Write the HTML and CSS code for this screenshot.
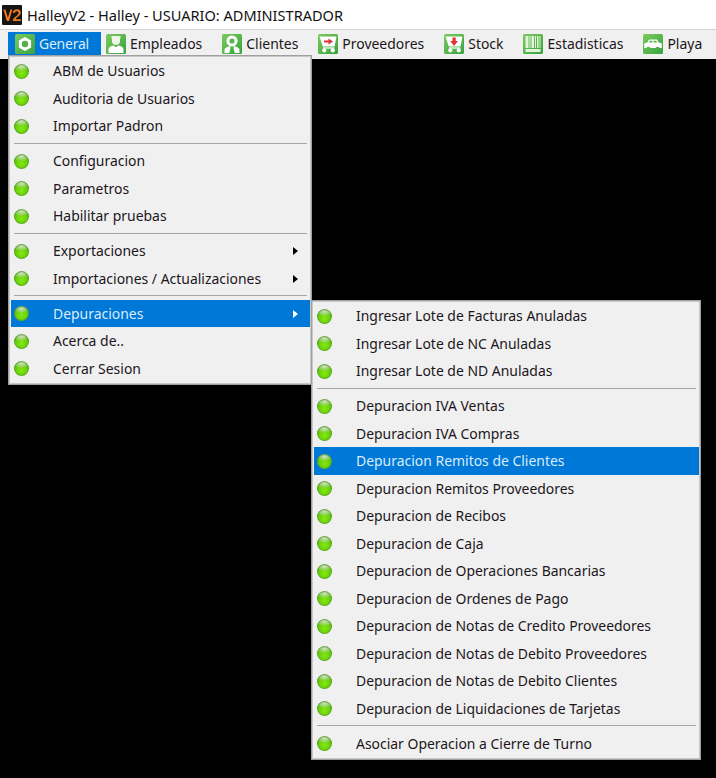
FILE: index.html
```html
<!DOCTYPE html>
<html lang="es">
<head>
<meta charset="utf-8">
<title>HalleyV2 - Halley - USUARIO: ADMINISTRADOR</title>
<link rel="stylesheet" href="styles.css">
</head>
<body>
<svg class="defs" width="0" height="0" aria-hidden="true">
  <defs>
    <linearGradient id="g" x1="0" y1="0" x2="1" y2="1">
      <stop offset="0" stop-color="#7ccb5e"/>
      <stop offset="1" stop-color="#37a33f"/>
    </linearGradient>
    <symbol id="tile" viewBox="0 0 20 20"><rect x="0" y="0" width="20" height="20" rx="1.5" fill="url(#g)"/></symbol>
  </defs>
</svg>
<header class="titlebar">
  <svg class="logo" viewBox="0 0 20 20"><rect width="20" height="20" rx="1" fill="#151515"/><path d="M1.4 4.5 L4.8 16 L7 16 L10.4 4.5 L8.4 4.5 L5.9 12.8 L3.4 4.5 Z" fill="#f47a20"/><path d="M10.8 7.8 C11 3.2 18.8 3 18.8 7.8 C18.8 10.6 14.4 12 13.6 14.2 L18.8 14.2 L18.8 16 L10.8 16 C10.8 12 16.6 10.6 16.6 7.9 C16.6 5.8 13 5.8 12.9 8 Z" fill="#f47a20"/></svg>
  <span class="title">HalleyV2 - Halley - USUARIO: ADMINISTRADOR</span>
</header>
<nav class="menubar">
  <div class="mitem active">
    <svg class="mico" viewBox="0 0 20 20"><use href="#tile"/><path d="M10 3 L16.1 6.5 V13.5 L10 17 L3.9 13.5 V6.5 Z" fill="#fff"/><circle cx="10" cy="10" r="3.2" fill="#55b04a"/></svg>
    <span>General</span>
  </div>
  <div class="mitem">
    <svg class="mico" viewBox="0 0 20 20"><use href="#tile"/><path d="M5.5 2 H14.5 V4.6 H14 V7.5 C14 9.8 12.2 11 10 11 C7.8 11 6 9.8 6 7.5 V4.6 H5.5 Z" fill="#eef7ea"/><path d="M2.5 19 V15 C2.5 13 5.6 11.9 7.4 11.4 L10 13.2 L12.6 11.4 C14.4 11.9 17.5 13 17.5 15 V19 Z" fill="#fff"/></svg>
    <span>Empleados</span>
  </div>
  <div class="mitem">
    <svg class="mico" viewBox="0 0 20 20"><use href="#tile"/><circle cx="10" cy="7" r="5.6" fill="#fff"/><circle cx="10" cy="7" r="2.6" fill="#5ab54d"/><path d="M2.5 19 V15.8 C2.5 13.8 5.6 13 8 12 L8.4 14.5 L7.2 19 Z M17.5 19 V15.8 C17.5 13.8 14.4 13 12 12 L11.6 14.5 L12.8 19 Z" fill="#fff"/></svg>
    <span>Clientes</span>
  </div>
  <div class="mitem">
    <svg class="mico" viewBox="0 0 20 20"><use href="#tile"/><path d="M1.5 2.5 H18.5 L16.6 12.5 H4.8 Z" fill="#fff"/><circle cx="6.3" cy="16.3" r="2.1" fill="#fff"/><circle cx="14.8" cy="16.3" r="2.1" fill="#fff"/><path d="M5 14 H16.4" stroke="#fff" stroke-width="1.3"/><path d="M6 6.6 H10.5 V4.6 L15 7.6 L10.5 10.6 V8.6 H6 Z" fill="#e0323a"/></svg>
    <span>Proveedores</span>
  </div>
  <div class="mitem">
    <svg class="mico" viewBox="0 0 20 20"><use href="#tile"/><path d="M1.5 2.5 H18.5 L16.6 12.5 H4.8 Z" fill="#fff"/><circle cx="6.3" cy="16.3" r="2.1" fill="#fff"/><circle cx="14.8" cy="16.3" r="2.1" fill="#fff"/><path d="M5 14 H16.4" stroke="#fff" stroke-width="1.3"/><path d="M8.5 3.5 H11.7 V7 H14 L10 12 L6.2 7 H8.5 Z" fill="#e0323a"/></svg>
    <span>Stock</span>
  </div>
  <div class="mitem">
    <svg class="mico" viewBox="0 0 20 20"><use href="#tile"/><path d="M2.5 2 H5.5 V14 H2.5 Z M6.5 2 H7.5 V14 H6.5 Z M8.5 2 H11 V14 H8.5 Z M12 2 H13 V14 H12 Z M14 2 H15.5 V14 H14 Z M16.5 2 H17.5 V14 H16.5 Z M2.5 15 H17.5 V18 H2.5 Z" fill="#e4f4dc"/></svg>
    <span>Estadisticas</span>
  </div>
  <div class="mitem">
    <svg class="mico" viewBox="0 0 20 20"><use href="#tile"/><path d="M1.2 14 V10.2 C1.2 9.2 2.8 8.8 4.4 8.5 L6 5.5 H14 L15.6 8.5 C17.2 8.8 18.8 9.2 18.8 10.2 V14 H16.6 A2.2 2.2 0 0 0 12.6 14 H7.4 A2.2 2.2 0 0 0 3.4 14 Z" fill="#fff"/><path d="M6.8 6.7 H9.4 V8.6 H5.8 Z M10.6 6.7 H13.2 L14.2 8.6 H10.6 Z" fill="#5ab54d"/></svg>
    <span>Playa</span>
  </div>
</nav>
<main class="desktop"></main>

<div class="popup popup-main">
  <div class="row"><i class="dot"></i><span>ABM de Usuarios</span></div>
  <div class="row"><i class="dot"></i><span>Auditoria de Usuarios</span></div>
  <div class="row"><i class="dot"></i><span>Importar Padron</span></div>
  <div class="sep"></div>
  <div class="row"><i class="dot"></i><span>Configuracion</span></div>
  <div class="row"><i class="dot"></i><span>Parametros</span></div>
  <div class="row"><i class="dot"></i><span>Habilitar pruebas</span></div>
  <div class="sep"></div>
  <div class="row"><i class="dot"></i><span>Exportaciones</span><b class="arrow"></b></div>
  <div class="row"><i class="dot"></i><span>Importaciones / Actualizaciones</span><b class="arrow"></b></div>
  <div class="sep"></div>
  <div class="row hot"><i class="dot"></i><span>Depuraciones</span><b class="arrow"></b></div>
  <div class="row"><i class="dot"></i><span>Acerca de..</span></div>
  <div class="row"><i class="dot"></i><span>Cerrar Sesion</span></div>
</div>

<div class="popup popup-sub">
  <div class="row"><i class="dot"></i><span>Ingresar Lote de Facturas Anuladas</span></div>
  <div class="row"><i class="dot"></i><span>Ingresar Lote de NC Anuladas</span></div>
  <div class="row"><i class="dot"></i><span>Ingresar Lote de ND Anuladas</span></div>
  <div class="sep"></div>
  <div class="row"><i class="dot"></i><span>Depuracion IVA Ventas</span></div>
  <div class="row"><i class="dot"></i><span>Depuracion IVA Compras</span></div>
  <div class="row hot"><i class="dot"></i><span>Depuracion Remitos de Clientes</span></div>
  <div class="row"><i class="dot"></i><span>Depuracion Remitos Proveedores</span></div>
  <div class="row"><i class="dot"></i><span>Depuracion de Recibos</span></div>
  <div class="row"><i class="dot"></i><span>Depuracion de Caja</span></div>
  <div class="row"><i class="dot"></i><span>Depuracion de Operaciones Bancarias</span></div>
  <div class="row"><i class="dot"></i><span>Depuracion de Ordenes de Pago</span></div>
  <div class="row"><i class="dot"></i><span>Depuracion de Notas de Credito Proveedores</span></div>
  <div class="row"><i class="dot"></i><span>Depuracion de Notas de Debito Proveedores</span></div>
  <div class="row"><i class="dot"></i><span>Depuracion de Notas de Debito Clientes</span></div>
  <div class="row"><i class="dot"></i><span>Depuracion de Liquidaciones de Tarjetas</span></div>
  <div class="sep"></div>
  <div class="row"><i class="dot"></i><span>Asociar Operacion a Cierre de Turno</span></div>
</div>
</body>
</html>
```

FILE: styles.css
```css
html, body {
  margin: 0;
  height: 100%;
  overflow: hidden;
  background: #000;
}
body {
  display: flex;
  flex-direction: column;
  font-family: "Noto Sans", "Open Sans", sans-serif;
  font-size: 13.95px;
  color: #1c1620;
}
.defs { position: absolute; }
.titlebar {
  display: flex;
  align-items: center;
  gap: 6px;
  height: 29px;
  padding-left: 2px;
  background: #fff;
  box-sizing: border-box;
}
.logo { width: 20px; height: 20px; flex: none; }
.title { font-size: 14.55px; color: #111; margin-left: -1px; }
.menubar {
  display: flex;
  align-items: center;
  height: 30px;
  padding: 1px 0 3px 8px;
  box-sizing: border-box;
  background: #f0f0f0;
  border-top: 1px solid #d4d4d4;
}
.mitem {
  display: flex;
  align-items: center;
  gap: 4px;
  height: 23px;
  padding: 0 15px 0 5px;
}
.mitem.active {
  padding: 0 12px 0 7px;
  background: #0078d7;
  color: #d9ecfb;
  letter-spacing: -0.2px;
}
.mico { width: 20px; height: 20px; flex: none; }
.desktop { flex: 1; background: #000; }
.popup {
  position: absolute;
  box-sizing: border-box;
  background: #f0f0f0;
  border: 1px solid #a0a0a0;
  outline: 1px solid #c8c8c8;
  outline-offset: -2px;
  padding: 1.25px 1.5px;
}
.popup-main { left: 8px; top: 55px; width: 304px; height: 330px; }
.popup-sub { left: 311px; top: 300px; width: 390px; height: 460px; }
.row {
  display: flex;
  align-items: center;
  height: 27.5px;
  padding-left: 3.5px;
}
.row span { margin-left: 24px; padding-bottom: 1px; }
.row.hot { background: #0078d7; color: #d9ecfb; }
.dot {
  width: 15px;
  height: 15px;
  flex: none;
  border-radius: 50%;
  background:
    radial-gradient(ellipse 55% 30% at 50% 18%, #d2dfca 0, rgba(210,223,202,0) 100%),
    radial-gradient(circle at 50% 62%, #84ea10 0, #66cc0a 50%, #3f9a16 100%);
  box-shadow: inset 0 0 0 1px rgba(80,135,60,.55);
}
.arrow {
  margin-left: auto;
  margin-right: 12px;
  width: 0;
  height: 0;
  border-left: 5px solid #000;
  border-top: 4.5px solid transparent;
  border-bottom: 4.5px solid transparent;
}
.row.hot .arrow { border-left-color: #fff; }
.sep {
  height: 1px;
  margin: 3px 3px 3.5px 3px;
  background: #a6a6a6;
}
```
